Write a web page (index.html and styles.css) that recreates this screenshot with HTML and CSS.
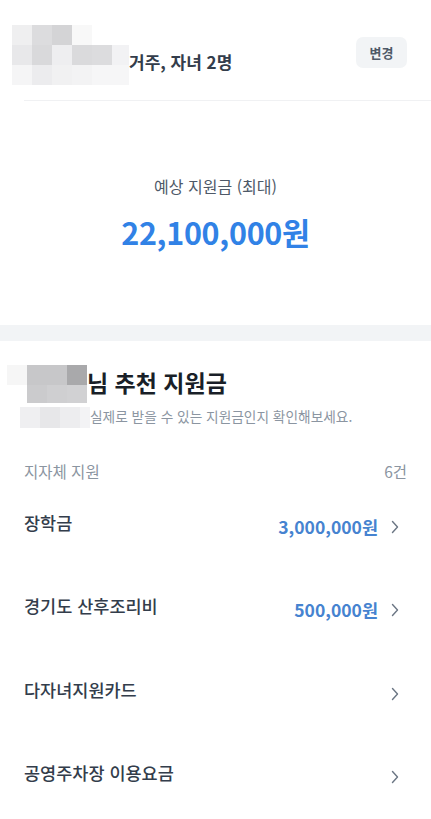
FILE: index.html
```html
<!DOCTYPE html>
<html lang="ko">
<head>
<meta charset="utf-8">
<title>추천 지원금</title>
<link rel="stylesheet" href="styles.css">
</head>
<body>
<div class="page">
  <section class="top">
    <div class="header">
      <div class="mosaic mosaic-1" aria-hidden="true">
        <i class="m1"></i><i class="m2"></i><i class="m3"></i><i class="m4"></i><i class="m0"></i><i class="m0"></i>
        <i class="m5"></i><i class="m6"></i><i class="m7"></i><i class="m8"></i><i class="m9"></i><i class="m10"></i>
        <i class="m11"></i><i class="m12"></i><i class="m13"></i><i class="m14"></i><i class="m15"></i><i class="m15"></i>
      </div>
      <div class="title">
        <div class="title-line blank"></div>
        <div class="title-line second">거주, 자녀 2명</div>
      </div>
      <button class="change-btn" type="button">변경</button>
    </div>
    <div class="summary">
      <div class="summary-label">예상 지원금 (최대)</div>
      <div class="summary-value">22,100,000원</div>
    </div>
  </section>

  <div class="band"></div>

  <section class="recommend">
    <div class="rec-head">
      <div class="mosaic mosaic-2" aria-hidden="true">
        <i class="n1"></i><i class="n2"></i><i class="n2"></i><i class="n3"></i>
        <i class="m0"></i><i class="n4"></i><i class="n5"></i><i class="n6"></i>
      </div>
      <div class="mosaic mosaic-3" aria-hidden="true">
        <i class="p1"></i><i class="p2"></i><i class="p3"></i><i class="p4"></i>
      </div>
      <h2 class="rec-title">님 추천 지원금</h2>
      <p class="rec-sub">실제로 받을 수 있는 지원금인지 확인해보세요.</p>
    </div>

    <div class="group-head">
      <span class="group-name">지자체 지원</span>
      <span class="group-count">6건</span>
    </div>

    <ul class="list">
      <li class="row">
        <span class="row-label">장학금</span>
        <span class="row-right">
          <span class="amount">3,000,000원</span>
          <svg class="chev" width="8" height="14" viewBox="0 0 8 14"><path d="M1.5 1.5 L6.5 7 L1.5 12.5" fill="none" stroke="#6b7684" stroke-width="1.4" stroke-linecap="round" stroke-linejoin="round"/></svg>
        </span>
      </li>
      <li class="row">
        <span class="row-label">경기도 산후조리비</span>
        <span class="row-right">
          <span class="amount">500,000원</span>
          <svg class="chev" width="8" height="14" viewBox="0 0 8 14"><path d="M1.5 1.5 L6.5 7 L1.5 12.5" fill="none" stroke="#6b7684" stroke-width="1.4" stroke-linecap="round" stroke-linejoin="round"/></svg>
        </span>
      </li>
      <li class="row">
        <span class="row-label">다자녀지원카드</span>
        <span class="row-right">
          <svg class="chev" width="8" height="14" viewBox="0 0 8 14"><path d="M1.5 1.5 L6.5 7 L1.5 12.5" fill="none" stroke="#6b7684" stroke-width="1.4" stroke-linecap="round" stroke-linejoin="round"/></svg>
        </span>
      </li>
      <li class="row">
        <span class="row-label">공영주차장 이용요금</span>
        <span class="row-right">
          <svg class="chev" width="8" height="14" viewBox="0 0 8 14"><path d="M1.5 1.5 L6.5 7 L1.5 12.5" fill="none" stroke="#6b7684" stroke-width="1.4" stroke-linecap="round" stroke-linejoin="round"/></svg>
        </span>
      </li>
    </ul>
  </section>
</div>
</body>
</html>
```

FILE: styles.css
```css
* { box-sizing: border-box; }
html, body { margin: 0; padding: 0; background: #fff; }
body {
  font-family: "Noto Sans CJK KR", "Noto Sans", sans-serif;
  color: #191f28;
  -webkit-font-smoothing: antialiased;
}
.page { width: 431px; overflow: hidden; }

/* top */
.top { padding-left: 24px; }
.header {
  position: relative;
  display: flex;
  justify-content: space-between;
  align-items: flex-start;
  height: 101px;
  padding: 23px 24px 0 0;
  border-bottom: 1px solid #f0f1f3;
}
.title { font-size: 17px; font-weight: 700; line-height: 26px; color: #333d4b; }
.title-line.blank { height: 26px; }
.title-line.second { padding-left: 105px; }
.change-btn {
  margin-top: 14px;
  width: 51px;
  height: 31px;
  border: 0;
  border-radius: 7px;
  background: #f2f4f6;
  color: #4e5968;
  font-family: inherit;
  font-size: 13px;
  font-weight: 600;
  padding: 0;
  line-height: 31px;
}

.summary {
  padding: 74px 24px 73px 0;
  text-align: center;
}
.summary-label { font-size: 16px; line-height: 22px; color: #4e5968; }
.summary-value {
  margin-top: 15px;
  font-size: 30.5px;
  line-height: 40px;
  font-weight: 700;
  color: #3182e6;
  letter-spacing: -0.3px;
}

.band { height: 16px; background: #f2f4f6; }

/* recommend */
.recommend { padding: 26px 24px 0 24px; }
.rec-head { position: relative; }
.rec-title {
  margin: 0;
  padding-left: 63px;
  font-size: 23px;
  line-height: 30px;
  font-weight: 700;
  color: #191f28;
}
.rec-sub {
  margin: 9px 0 0 0;
  padding-left: 66px;
  font-size: 13.7px;
  line-height: 20px;
  color: #8b95a1;
}

.group-head {
  display: flex;
  justify-content: space-between;
  margin-top: 35px;
  font-size: 15.5px;
  line-height: 20px;
  color: #8b95a1;
}

.list { list-style: none; margin: 0; padding: 0; }
.row {
  display: flex;
  justify-content: space-between;
  align-items: flex-start;
  height: 83.3px;
  padding-top: 30px;
}
.row-label { font-size: 17.5px; line-height: 24px; font-weight: 500; color: #333d4b; }
.row-right {
  display: flex;
  align-items: center;
  gap: 13px;
  margin-top: 4px;
  height: 24px;
}
.amount { font-size: 17.5px; font-weight: 600; color: #4683d0; line-height: 24px; }
.chev { display: block; margin-right: 8px; }

/* mosaic overlays (blurred private info) */
.mosaic { position: absolute; display: grid; }
.mosaic i { display: block; }
.mosaic-1 {
  left: -12px; top: 25px;
  grid-template-columns: 20px 20px 20px 20px 20px 17px;
  grid-template-rows: 20px 20px 20px;
}
.mosaic-2 {
  left: -17px; top: -2px;
  grid-template-columns: 20px 20px 20px 20px;
  grid-template-rows: 20px 18px;
}
.mosaic-3 {
  left: -4px; top: 40px;
  grid-template-columns: 20px 20px 20px 10px;
  grid-template-rows: 21px;
}
.m0 { background: transparent; }
.m1 { background: #efeff0; }
.m2 { background: #dcdcde; }
.m3 { background: #d4d4d6; }
.m4 { background: #f8f8f8; }
.m5 { background: #e8e8ea; }
.m6 { background: #d9d9db; }
.m7 { background: #eeeef0; }
.m8 { background: #dadadc; }
.m9 { background: #dcdcde; }
.m10 { background: #f2f2f4; }
.m11 { background: #f5f5f6; }
.m12 { background: #ececee; }
.m13 { background: #f1f1f2; }
.m14 { background: #f3f3f4; }
.m15 { background: #f6f6f7; }
.n1 { background: #f6f6f6; }
.n2 { background: #c7c7c9; }
.n3 { background: #a9a9ab; }
.n4 { background: #cbcbcd; }
.n5 { background: #cfcfd1; }
.n6 { background: #d1d1d3; }
.p1 { background: #efeff1; }
.p2 { background: #e7e7e9; }
.p3 { background: #ededef; }
.p4 { background: #f3f3f5; }
```
